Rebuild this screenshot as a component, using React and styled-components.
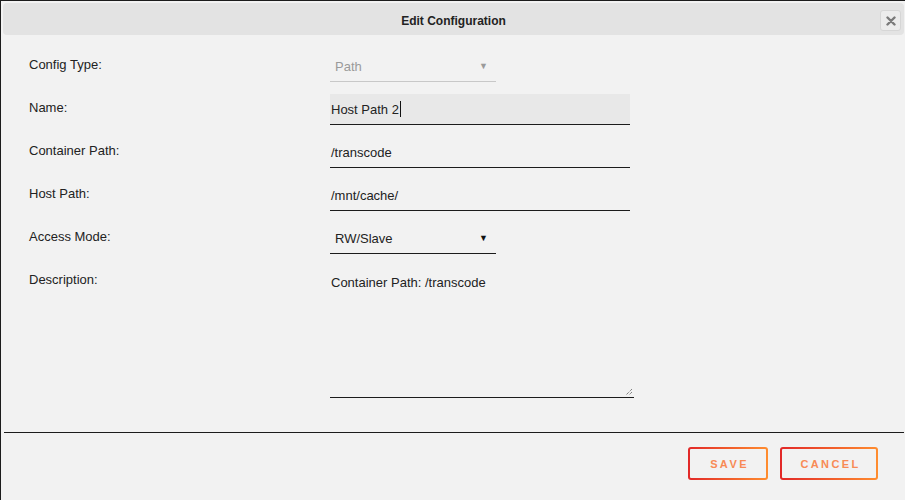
import React from 'react'
import styled, { createGlobalStyle } from 'styled-components'

const Global = createGlobalStyle`
  html, body { margin: 0; padding: 0; background: #f2f2f2; overflow: hidden; }
  body { font-family: "Liberation Sans", Arial, sans-serif; color: #222; }
`

const Dialog = styled.div`
  box-sizing: border-box;
  width: 907px;
  height: 520px;
  border: 1px solid #1c1c1c;
  background: #f2f2f2;
  padding: 2px;
`

const TitleBar = styled.div`
  position: relative;
  box-sizing: border-box;
  height: 32px;
  padding-top: 3px;
  background: #e3e3e3;
  border-radius: 4px;
  display: flex;
  align-items: center;
  justify-content: center;
  font-size: 12px;
  font-weight: bold;
  color: #222;
`

const CloseBtn = styled.button`
  position: absolute;
  right: 3px;
  top: 7px;
  width: 21px;
  height: 21px;
  padding: 0;
  border: 1px solid #d6d6d6;
  border-radius: 3px;
  background: #ececec;
  display: flex;
  align-items: center;
  justify-content: center;
`

const Form = styled.div`
  display: grid;
  grid-template-columns: 301px 1fr;
  grid-template-rows: repeat(5, 43px) auto;
  padding: 16px 0 0 26px;
`

const Label = styled.div`
  font-size: 13px;
  line-height: 16px;
  padding-top: 6px;
  color: #222;
`

const Select = styled.div`
  box-sizing: border-box;
  width: 166px;
  height: 31px;
  display: flex;
  align-items: center;
  justify-content: space-between;
  padding: 0 8px 0 5px;
  font-size: 13px;
  color: ${p => (p.$disabled ? '#9a9a9a' : '#222')};
  border-bottom: 1px solid ${p => (p.$disabled ? '#c8c8c8' : '#1c1c1c')};
`

const Arrow = styled.span`
  font-size: 9px;
  color: ${p => (p.$disabled ? '#9a9a9a' : '#111')};
`

const Input = styled.div`
  box-sizing: border-box;
  width: 300px;
  height: 31px;
  display: flex;
  align-items: center;
  padding: 0 0 0 1px;
  font-size: 13px;
  color: #222;
  background: ${p => (p.$focus ? '#e8e8e8' : 'transparent')};
  border-bottom: 1px solid #1c1c1c;
`

const Caret = styled.span`
  display: inline-block;
  width: 1px;
  height: 16px;
  margin-left: 1px;
  background: #111;
`

const TextArea = styled.div`
  position: relative;
  box-sizing: border-box;
  width: 304px;
  height: 132px;
  padding: 9px 0 0 1px;
  font-size: 13px;
  color: #222;
  border-bottom: 1px solid #1c1c1c;
`

const Grip = styled.svg`
  position: absolute;
  right: 1px;
  bottom: 1px;
`

const Footer = styled.div`
  margin: 34px 0 0 1px;
  border-top: 1px solid #1c1c1c;
  display: flex;
  justify-content: flex-end;
  gap: 12px;
  padding: 14px 26px 0 0;
`

const Button = styled.button`
  box-sizing: border-box;
  width: ${p => p.$w}px;
  height: 33px;
  border: 2px solid transparent;
  border-radius: 3px;
  background: linear-gradient(#f2f2f2, #f2f2f2) padding-box,
    linear-gradient(90deg, #e22828, #ff8d2f) border-box;
  font-family: "Liberation Sans", Arial, sans-serif;
  font-size: 11px;
  font-weight: bold;
  letter-spacing: 2.4px;
  color: #f88a55;
  padding: 1px 0 0 3px;
`

const App = () => {
  return (
    <>
      <Global />
      <Dialog>
        <TitleBar>
          Edit Configuration
          <CloseBtn>
            <svg width="10" height="10" viewBox="0 0 10 10">
              <path d="M1.5 1.5 L8.5 8.5 M8.5 1.5 L1.5 8.5" stroke="#7a7a7a" strokeWidth="2.4" strokeLinecap="round" />
            </svg>
          </CloseBtn>
        </TitleBar>

        <Form>
          <Label>Config Type:</Label>
          <Select $disabled>
            <span>Path</span>
            <Arrow $disabled>▼</Arrow>
          </Select>

          <Label>Name:</Label>
          <Input $focus>
            Host Path 2<Caret />
          </Input>

          <Label>Container Path:</Label>
          <Input>/transcode</Input>

          <Label>Host Path:</Label>
          <Input>/mnt/cache/</Input>

          <Label>Access Mode:</Label>
          <Select>
            <span>RW/Slave</span>
            <Arrow>▼</Arrow>
          </Select>

          <Label>Description:</Label>
          <TextArea>
            Container Path: /transcode
            <Grip width="8" height="8" viewBox="0 0 8 8">
              <path d="M7 1 L1 7 M7 4 L4 7" stroke="#555" strokeWidth="1" strokeDasharray="1 1" />
            </Grip>
          </TextArea>
        </Form>

        <Footer>
          <Button $w={80}>SAVE</Button>
          <Button $w={98}>CANCEL</Button>
        </Footer>
      </Dialog>
    </>
  )
}

export default App
